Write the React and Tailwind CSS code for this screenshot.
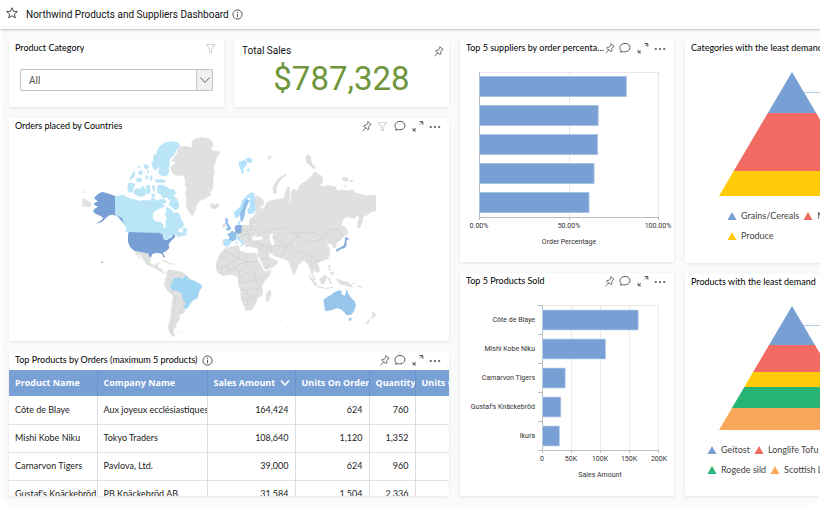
import React from "react";

const PinIcon = () => (
  <svg viewBox="0 0 12 12" className="h-[11px] w-[11px]" fill="none" stroke="currentColor" strokeWidth="0.9" strokeLinejoin="round" strokeLinecap="round">
    <path d="M7.6 1 11 3.6 9.8 4.3 8.4 6.3 8.6 8.8 7.6 9.4 2.6 5.6 3.4 4.8 5.8 4.6 7.3 2.6Z M5 7.5 2 11" />
  </svg>
);

const FunnelIcon = () => (
  <svg viewBox="0 0 12 12" className="h-[11px] w-[11px]" fill="none" stroke="#d3d6d6" strokeWidth="1.2" strokeLinejoin="round">
    <path d="M1.3 1.6H10.7L7.2 6V10.2H4.8V6Z" />
  </svg>
);

const CommentIcon = () => (
  <svg viewBox="0 0 12 12" className="h-3 w-3" fill="none" stroke="currentColor" strokeWidth="1" strokeLinejoin="round">
    <path d="M2.3 8.9C.4 7 .6 4 2.6 2.5c2-1.5 5-1.4 6.8 0 2 1.6 2 4.4.2 6C8 9.900 6 10.100 4.300 9.600L1.600 10.200Z" />
  </svg>
);

const ExpandIcon = () => (
  <svg viewBox="0 0 12 12" className="h-3 w-3" fill="none" stroke="currentColor" strokeWidth="1">
    <path d="M7.500 1.500H10.800V4.800M10.500 1.800 8 4.300M1.200 8V10.800H4M1.500 10.500 3.800 8.200" />
  </svg>
);

const MoreIcon = () => (
  <svg viewBox="0 0 12 12" className="h-3 w-3" fill="currentColor">
    <circle cx="1.800" cy="7" r="1.100" />
    <circle cx="6" cy="7" r="1.100" />
    <circle cx="10.200" cy="7" r="1.100" />
  </svg>
);

const InfoIcon = () => (
  <svg viewBox="0 0 12 12" className="h-[11px] w-[11px] shrink-0 text-[#444]" fill="none" stroke="currentColor" strokeWidth="1">
    <circle cx="6" cy="6" r="5" />
    <path d="M6 5.300V9M6 3V4.200" />
  </svg>
);

function IconButton({ label, className, children }) {
  return (
    <button type="button" aria-label={label} className={`flex h-[15px] items-center justify-center ${className}`}>
      {children}
    </button>
  );
}

function Tools({ funnel }) {
  return (
    <div className="flex shrink-0 items-center text-[#555]">
      <IconButton label="Pin" className="w-[13px]"><PinIcon /></IconButton>
      {funnel && <IconButton label="Filter" className="w-[18px]"><FunnelIcon /></IconButton>}
      <IconButton label="Comment" className="w-[18px]"><CommentIcon /></IconButton>
      <IconButton label="Maximize" className="w-[18px]"><ExpandIcon /></IconButton>
      <IconButton label="More options" className="w-4"><MoreIcon /></IconButton>
    </div>
  );
}

function Card({ title, tools, info, className = "", children }) {
  return (
    <section className={`overflow-hidden bg-white shadow-[0_1px_3px_rgba(0,0,0,0.09)] ${className}`}>
      <div className="flex h-4 items-center justify-between px-[6px]">
        <div className="-mr-[3px] flex min-w-0 items-center gap-1">
          <h2 className="truncate font-[Lato,Roboto,sans-serif] text-[9px] leading-4 text-black">{title}</h2>
          {info && <InfoIcon />}
        </div>
        {tools}
      </div>
      {children}
    </section>
  );
}

const GREY = "#dfe1e1";
const CANADA = "#bae5f6";
const DEEP = "#78a0d5";

function WorldMap() {
  return (
    <svg viewBox="0 1 440 207" className="block w-full" role="img" aria-label="Orders placed by Countries">
      <g transform="translate(61 -3) scale(0.33333)">
        <g fill={GREY}>
          <path d="M326 50 345 47 366 52 364 36 372 27 392 22 412 24 425 32 430 44 424 56 430 62 446 62 450 70 440 84 436 100 430 110 434 124 430 142 431 160 428 178 420 188 424 196 412 202 398 210 388 214 380 228 376 244 370 257 360 252 352 238 348 222 350 206 345 192 350 176 344 166 346 150 340 136 326 138 312 134 304 122 300 112 312 104 316 96 304 92 310 84 320 72Z" />
          <path d="M420 222 428 220 432 224 444 219 448 227 440 236 428 237 421 231Z" />
          <path d="M37 203 49 209 61 217 65 225 55 233 49 229 37 231ZM38 184H44V188H38Z" />
          <path d="M192 362 212 366 222 368 234 370 238 380 244 384 240 396 246 404 258 404 262 398 270 396 264 406 264 412 276 418 278 424 286 430 292 428 290 432 278 430 268 422 256 416 242 410 228 402 220 390 206 370 204 374 214 390 208 386 198 372Z" />
          <path d="M272 391 284 391 298 398 292 399 282 395ZM294 399 304 398 312 402 298 404ZM314 401H319V404H314Z" />
          <path d="M290 424 300 418 318 422 332 424 346 432 352 440 370 450 394 465 384 500 352 530 346 540 340 550 328 556 330 566 320 580 318 590 310 600 312 612 319 618 310 620 300 612 296 600 294 588 300 570 302 550 306 520 308 496 292 482 282 464 284 450 290 438Z" />
          <path d="M330 604 338 603V605L330 606ZM88 391H92V393H88ZM38 490H41V492H38Z" />
        </g>
        <g fill={CANADA}>
          <path d="M262 60 270 48 284 38 304 34 326 38 330 48 318 62 312 76 300 88 298 104 296 128 290 138 274 138 264 130 268 112 262 100 266 84 258 74Z" />
          <path d="M250 76 260 72 268 88 266 110 258 122 248 114 244 98 250 92Z" />
          <path d="M220 106 230 102 238 110 232 118 224 116ZM204 108 210 106 210 114 205 115ZM206 124 216 120 220 128 214 136 204 132ZM184 136 192 124 196 130 192 140 182 150 178 146ZM230 122 236 120 236 130 231 128ZM198 148 208 142 218 148 212 156 200 156ZM228 134 234 138 232 150 226 146ZM238 142 246 134 248 146 242 154ZM256 148 276 148 286 152 284 158 262 158 254 154Z" />
          <path d="M174 160 188 158 196 166 190 176 188 186 176 188 172 176ZM192 180 202 174 214 178 212 170 222 168 228 182 226 198 208 200 196 194 190 188ZM230 164 240 166 242 184 236 194 228 188ZM246 166 254 166 256 180 250 186ZM244 192 254 190 254 202 246 200Z" />
          <path d="M262 166 276 164 290 170 298 176 314 180 318 192 310 196 322 208 328 222 326 236 314 240 306 232 296 226 300 212 290 202 280 206 272 194 262 188ZM272 210 282 206 290 216 284 222 274 218Z" />
          <path d="M135 198 150 196 160 194 168 200 186 206 208 212 226 210 240 212 246 202 256 208 262 214 272 204 278 222 286 228 276 234 264 238 250 248 248 262 256 274 270 276 278 280 282 294 288 292 286 276 290 264 284 252 290 244 286 232 298 234 306 240 312 250 320 246 330 254 334 268 342 282 340 290 332 296 322 300 330 308 336 306 350 308 348 316 334 318 322 322 318 312 308 316 290 328 280 328 276 314 268 308 176 306 164 304 170 296 160 280 152 268 135 254Z" />
          <path d="M338 296 346 292 352 302 350 308 340 306Z" />
        </g>
        <g fill={DEEP}>
          <path d="M135 198 120 192 96 185 84 192 72 204 78 210 84 214 72 220 74 226 84 230 72 238 70 246 78 252 92 258 100 264 92 272 76 282 96 276 108 264 118 256 128 254 142 258 154 272 162 282 156 264 135 254Z" />
          <path d="M176 306 268 308 278 314 280 328 290 330 306 320 312 312 316 316 315 322 302 334 296 344 298 354 288 364 278 368 285 380 282 384 276 372 262 368 246 372 244 382 238 380 234 370 222 368 212 366 192 362 180 350 174 336 174 316Z" />
          <path d="M95 395H99V399H95Z" />
        </g>
        <path d="M296 420 300 436 312 440 318 446M332 426 330 440M290 444 300 450M300 470 296 458 306 458M308 496 306 480M308 496 318 502 316 514 306 520M318 502 338 508 342 524M316 514 312 550 306 580 304 600 310 610M342 524 330 534 332 550" fill="none" stroke="#cbcdcd" strokeWidth="1.500" />
        <path fill="#9fd6f4" d="M310 446 322 444 328 440 336 448 350 436 356 448 372 452 394 464 396 472 386 486 382 506 368 510 360 520 356 530 348 538 340 530 346 522 342 512 338 504 334 490 320 482 306 480 300 470 306 458Z" />
      </g>
      <g transform="translate(211 -3) scale(0.33333)">
        <g fill={GREY}>
          <path d="M142 80 156 78 152 86 146 90ZM160 188 158 174 164 160 176 144 196 132 200 136 186 146 176 158 170 172 170 190 164 192ZM256 82 264 72 272 80 276 100 288 110 284 118 276 114 268 104 260 100Z" />
          <path d="M366 146 370 140 384 144 386 152 374 156ZM388 150 400 150 398 156 390 156ZM372 168 380 166 380 170 374 172Z" />
          <path d="M104 200 112 196 124 204 132 214 130 226 120 230 124 238 134 232 136 222 146 214 156 210 180 206 192 204 196 186 200 172 208 170 210 186 208 218 212 214 214 184 222 176 232 182 236 170 246 160 262 150 276 136 284 122 290 128 306 138 310 156 300 168 330 166 348 170 352 182 368 178 380 182 400 178 402 186 420 192 440 196 468 194 468 244 452 246 444 254 430 262 428 276 418 296 412 294 412 278 418 262 410 258 404 266 380 260 370 270 364 284 376 290 380 304 376 316 362 330 350 338 348 354 338 352 334 342 322 344 330 356 330 374 322 388 300 396 290 400 298 412 300 424 292 428 282 422 278 432 288 450 282 450 274 434 270 416 262 400 250 392 236 404 230 420 222 436 214 420 208 400 200 390 180 384 162 378 150 368 146 374 152 384 162 388 176 394 170 404 150 416 134 420 118 386 112 372 114 356 98 352 84 350 78 352 70 338 62 326 54 320 46 310 44 290 66 286 88 284 86 274 90 264 98 262 106 250Z" />
          <path d="M18 352 40 348 56 346 60 362 80 368 108 370 116 384 128 412 136 424 154 420 152 434 132 456 126 470 130 488 126 496 114 504 108 520 96 540 78 544 70 524 62 506 62 480 54 462 54 444 48 438 30 434 10 438 -6 430 -12 416 -12 398 -2 376 8 362Z" />
          <path d="M140 488 152 478 154 490 146 514 138 514 138 500ZM264 432 276 444 292 462 286 468 272 450ZM290 466 314 472V476L290 471ZM298 448 314 434 322 440 318 452 312 464 302 460ZM324 446 336 442 330 449 336 462 331 462 326 454ZM324 404 332 406 330 416 336 422 328 420ZM330 428 340 424 342 432 334 434ZM326 386 329 384 329 391 326 391ZM226 430 231 432 229 437ZM316 474 340 470 340 473 320 477Z" />
          <path d="M346 446 354 448 368 452 384 456 400 472 388 472 376 466 362 464 354 456ZM394 460 406 458 404 463ZM410 464 428 474 426 477 410 468ZM434 502 440 506 438 508ZM465 494H470V497H465ZM454 544 466 550 468 556 456 566 452 562 458 554ZM452 564 446 580 438 584 440 576ZM198 592 204 592 202 597Z" />
          <path d="M8 282 16 279 16 291 6 294ZM7 328H13V346H8ZM380 290 384 304 382 318 378 316Z" />
        </g>
        <g fill="#fff">
          <path d="M148 314 160 310 157 322 165 344 156 346 149 330ZM96 322 106 318 112 322 122 318 130 328 112 330 98 332Z" />
          <path d="M112 384 117 382 138 422 132 422ZM318 344 334 342 330 350Z" />
        </g>
        <path d="M10 364 30 370 56 386 58 362M-2 378 18 380 34 396 56 386 80 396 82 370M80 396 110 396M-10 408 14 410 34 396M14 410 24 418 46 414 58 402 80 396 78 412 56 424 46 414M24 418 24 434M6 412 4 432M56 424 60 440 80 430 102 434 112 414 122 404M78 412 92 428M102 434 110 446 130 452M60 440 60 456 78 460 92 450 106 452 104 436M60 480 82 480 92 470 104 478 124 476M106 452 124 468M82 480 84 504 96 506 112 494M64 508 84 510 82 530M96 506 108 514M128 412 142 418" fill="none" stroke="#c9cbcb" strokeWidth="1.600" />
        <path d="M66 300 84 304 92 298 96 274M92 298 110 300 122 312 140 306M70 316 86 310 84 328 96 332M66 308 70 316 62 322M150 312 148 302 160 296 180 298 196 292 208 308 224 312 240 318 220 328 206 344 190 340 170 330 162 318M224 312 250 306 284 308 300 316 320 312 330 300 356 296 368 318 346 334M240 318 262 334 290 332 312 320M118 346 136 350 152 352 166 346 180 350 190 346 200 350 190 368 182 384M112 360 126 354 136 372 144 372M118 386 140 384 150 388M136 352 148 368M152 352 154 368M200 350 216 346 224 362 248 372 264 370 262 396M264 370 276 378 290 394 302 388M276 378 272 404 280 416M290 394 292 408 284 416M150 404 134 414M92 336 116 340 130 346M102 264 98 274 112 280" fill="none" stroke="#c9cbcb" strokeWidth="1.600" />
        <g fill="#b4e2fa">
          <path d="M56 96 68 92 72 88 82 98 78 108 70 114 72 128 66 132 62 118 58 110ZM76 88 86 82 96 86 96 96 86 100ZM80 118 86 114 90 120 84 126Z" />
          <path d="M44 264 42 246 60 230 66 212 78 198 96 186 106 192 102 198 92 202 80 206 72 220 66 236 62 256 54 262ZM88 212 92 200 104 198 106 240 98 252 84 252 82 240 90 228ZM53 278 59 270 60 284 54 286Z" />
          <path d="M13 327 28 328 36 334 28 346 16 350 12 345ZM48 320 60 318 60 326 72 340 70 347 64 340 52 328ZM48 334 52 334 52 344 48 342ZM60 346 68 346 66 350Z" />
        </g>
        <g fill="#93c0ea">
          <path d="M62 276 60 250 66 236 72 216 80 206 88 212 82 226 76 240 74 256 68 274Z" />
          <path d="M16 264 24 266 24 280 30 288 34 298 24 302 18 300 22 290 16 280ZM20 312 28 310 36 302 44 306 50 312 48 330 38 334 26 330 28 320Z" />
        </g>
        <path fill="#98c5eb" d="M310 510 322 500 334 494 340 488 350 484 358 480 366 484 364 492 374 497 380 478 386 492 392 502 404 514 408 526 402 544 394 554 380 556 374 548 366 540 352 534 336 540 318 544 314 538 312 524ZM386 564H396L392 572H387Z" />
        <path fill="#86abdf" d="M44 290 50 285 66 286 64 308 54 312 46 308ZM376 320 388 326 379 332 380 346 374 354 362 358 350 366 348 359 362 352 372 346 374 336Z" />
      </g>
    </svg>
  );
}

const SUPPLIER_BARS = [81.800, 66.100, 65.700, 63.800, 61];

function SupplierChart() {
  return (
    <svg viewBox="0 1 214 206" className="block w-full" role="img" aria-label="Order percentage by supplier">
      <path d="M19 17.500H199M109.500 17V162M198.500 17V162" stroke="#e6e8e8" />
      <path d="M19.500 17V165M19 162.500H199M109.500 162V165M198.500 162V165" stroke="#b9bcbc" fill="none" />
      {SUPPLIER_BARS.map((value, i) => (
        <rect key={i} x="19.500" y={21.500 + i * 29} width={value * 1.795} height="20" fill={DEEP} stroke="#a9c3e5" />
      ))}
      <g fill="#333" fontSize="7" textAnchor="middle">
        <text x="19" y="173">0.00%</text>
        <text x="109" y="173">50.00%</text>
        <text x="198" y="173">100.00%</text>
        <text x="109" y="189">Order Percentage</text>
      </g>
    </svg>
  );
}

const PRODUCT_BARS = [
  ["Côte de Blaye", 164.400],
  ["Mishi Kobe Niku", 108.600],
  ["Carnarvon Tigers", 39],
  ["Gustaf's Knäckebröd", 31.600],
  ["Ikura", 29.500],
];

function ProductChart() {
  return (
    <svg viewBox="0 1 214 207" className="block w-full" role="img" aria-label="Sales amount by product">
      <path d="M82 17.500H199M111.500 17V162M140.500 17V162M169.500 17V162M198.500 17V162" stroke="#e9ebeb" />
      <path d="M82.500 17V162M82 162.500H199M78 17.500H82M78 46.500H82M78 75.500H82M78 104.500H82M78 133.500H82M78 162.500H82M82.500 162V165M111.500 162V165M140.500 162V165M169.500 162V165M198.500 162V165" stroke="#bbbebe" />
      <g fontSize="7" fill="#333">
        {PRODUCT_BARS.map(([name, value], i) => (
          <g key={name}>
            <rect x="82.500" y={22 + i * 29} width={value * 0.582} height="20" fill={DEEP} stroke="#c4d7ef" strokeWidth="0.700" />
            <text x="75" y={34 + i * 29} textAnchor="end">{name}</text>
          </g>
        ))}
        <g textAnchor="middle">
          <text x="82" y="173">0</text>
          <text x="111" y="173">50K</text>
          <text x="140" y="173">100K</text>
          <text x="169" y="173">150K</text>
          <text x="199" y="173">200K</text>
          <text x="140" y="189">Sales Amount</text>
        </g>
      </g>
    </svg>
  );
}

function Pyramid({ bands, lead }) {
  const slope = 73 / 124;
  return (
    <svg viewBox="0 1 214 142" className="block w-full" aria-hidden="true">
      <path d={`M115 ${lead}H214`} stroke="#b3cdec" />
      {bands.map(([top, bottom, color]) => (
        <path
          key={color}
          fill={color}
          d={`M${107 - top * slope} ${17 + top}H${107 + top * slope}L${107 + bottom * slope} ${17 + bottom}H${107 - bottom * slope}Z`}
        />
      ))}
    </svg>
  );
}

function LegendItem({ color, children }) {
  return (
    <li className="flex items-center gap-1 whitespace-nowrap">
      <svg viewBox="0 0 10 8" className="h-2 w-[10px]" aria-hidden="true"><path d="M5 0 9.500 8H.5Z" fill={color} /></svg>
      {children}
    </li>
  );
}

const ROWS = [
  ["Côte de Blaye", "Aux joyeux ecclésiastiques", "164,424", "624", "760", "17"],
  ["Mishi Kobe Niku", "Tokyo Traders", "108,640", "1,120", "1,352", "29"],
  ["Carnarvon Tigers", "Pavlova, Ltd.", "39,000", "624", "960", "42"],
  ["Gustaf's Knäckebröd", "PB Knäckebröd AB", "31,584", "1,504", "2,336", "104"],
];

function OrdersTable() {
  return (
    <div className="mt-[2px] h-[126px] overflow-hidden">
      <table className="w-full min-w-[500px] table-fixed border-collapse text-[9px]">
        <colgroup>
          <col className="w-[88px]" />
          <col className="w-[110px]" />
          <col className="w-[88px]" />
          <col className="w-[74px]" />
          <col className="w-[46px]" />
          <col />
        </colgroup>
        <thead>
          <tr className="h-[26px] bg-[#78a0d5] text-left font-['Open_Sans','Noto_Sans',sans-serif] text-white">
            {["Product Name", "Company Name", "Sales Amount", "Units On Order", "Quantity", "Units On Hand"].map((name, i) => (
              <th key={name} scope="col" className="overflow-hidden border-r border-[#6a92cb] p-0 pl-[6px] font-bold whitespace-nowrap">
                <span className="flex items-center gap-[5px]">
                  {name}
                  {i === 2 && (
                    <svg viewBox="0 0 10 8" className="h-2 w-[10px] shrink-0" fill="none" stroke="#fff" strokeWidth="1.600"><path d="M1 1.500 5 6 9 1.500" /></svg>
                  )}
                </span>
              </th>
            ))}
          </tr>
        </thead>
        <tbody className="font-[Lato,'Open_Sans',sans-serif]">
          {ROWS.map((row) => (
            <tr key={row[0]} className="h-7 border-b border-[#e2e2e2] text-[#222]">
              {row.map((cell, i) => (
                <td key={i} className={`overflow-hidden border-r border-[#dcdcdc] px-[6px] py-0 whitespace-nowrap ${i > 1 ? "text-right" : "pr-0"}`}>
                  {cell}
                </td>
              ))}
            </tr>
          ))}
        </tbody>
      </table>
    </div>
  );
}

export default function App() {
  return (
    <div className="min-h-screen overflow-hidden bg-white font-[Roboto,'Liberation_Sans',sans-serif] text-[#2a2a2a]">
      <header className="relative flex h-[29px] items-center bg-white pl-[6px] shadow-[0_1px_2px_rgba(0,0,0,0.25)]">
        <button type="button" aria-label="Favorite" className="mb-1">
          <svg viewBox="0 0 12 12" className="h-3 w-3" fill="none" stroke="#333" strokeWidth="0.900" strokeLinejoin="round">
            <path d="M6 .8 7.500 4.300 11.300 4.600 8.400 7.100 9.300 10.900 6 8.800 2.700 10.900 3.600 7.100.7 4.600 4.500 4.300Z" />
          </svg>
        </button>
        <h1 className="mr-[3px] ml-2 text-[10px] text-[#111]">Northwind Products and Suppliers Dashboard</h1>
        <InfoIcon />
      </header>
      <main className="ml-[2px] overflow-hidden rounded-b-2xl bg-[#f9fbfb] pt-[11px] pb-[11px] pl-[7px]">
        <div className="grid grid-cols-[minmax(440px,2fr)_minmax(214px,1fr)_minmax(214px,1fr)] gap-[11px]">
          <div className="flex flex-col gap-[11px]">
            <div className="grid grid-cols-2 gap-[10px]">
              <Card title={<label htmlFor="category">Product Category</label>} tools={<span className="pr-[2px]"><FunnelIcon /></span>}>
                <div className="mx-[11px] mt-[13px] mb-4 grid grid-cols-[1fr] rounded-[1px] border border-[#c3c5c5]">
                  <select id="category" className="col-start-1 row-start-1 h-5 w-full appearance-none bg-white pl-2 text-[10px] text-[#555]">
                    <option>All</option>
                  </select>
                  <span className="pointer-events-none col-start-1 row-start-1 flex w-4 items-center justify-center justify-self-end border-l border-[#c3c5c5] bg-[#eef0f1]">
                    <svg viewBox="0 0 10 8" className="h-2 w-[10px]" fill="none" stroke="#666"><path d="M.5 1.500 5 6.500 9.500 1.500" /></svg>
                  </span>
                </div>
              </Card>
              <section className="bg-white shadow-[0_1px_3px_rgba(0,0,0,0.09)]">
                <div className="flex items-center justify-between pt-[3px] pr-1 pl-2">
                  <h2 className="text-[10px] leading-4 text-[#111]">Total Sales</h2>
                  <IconButton label="Pin" className="w-[13px] text-[#555]"><PinIcon /></IconButton>
                </div>
                <p className="text-center text-[33px] leading-10 text-[#6f963c]">$787,328</p>
              </section>
            </div>
            <Card title="Orders placed by Countries" tools={<Tools funnel />}>
              <WorldMap />
            </Card>
            <Card title="Top Products by Orders (maximum 5 products)" info tools={<Tools />}>
              <OrdersTable />
            </Card>
          </div>
          <div className="flex flex-col gap-[11px]">
            <Card title="Top 5 suppliers by order percentage" tools={<Tools />}>
              <SupplierChart />
            </Card>
            <Card title="Top 5 Products Sold" tools={<Tools />}>
              <ProductChart />
            </Card>
          </div>
          <div className="grid grid-rows-2 gap-[11px]">
            <Card title="Categories with the least demand">
              <Pyramid lead="37.500" bands={[[0, 41, "#78a0d5"], [41, 99, "#f16b62"], [99, 124, "#ffca08"]]} />
              <ul className="flex flex-wrap gap-x-1 gap-y-1 pt-[10px] pl-[42px] font-[Lato,Roboto,sans-serif] text-[9px] leading-4 text-[#444]">
                <LegendItem color="#78a0d5">Grains/Cereals</LegendItem>
                <LegendItem color="#f16b62">Meat/Poultry</LegendItem>
                <LegendItem color="#ffca08">Produce</LegendItem>
              </ul>
            </Card>
            <Card title="Products with the least demand">
              <Pyramid lead="36.500" bands={[[0, 39, "#78a0d5"], [39, 66, "#f16b62"], [66, 81, "#ffca08"], [81, 102, "#27b473"], [102, 124, "#f9a75b"]]} />
              <ul className="flex flex-wrap gap-x-1 gap-y-1 pt-[10px] pl-[22px] font-[Lato,Roboto,sans-serif] text-[9px] leading-4 text-[#444]">
                <LegendItem color="#78a0d5">Geitost</LegendItem>
                <LegendItem color="#f16b62">Longlife Tofu</LegendItem>
                <LegendItem color="#ffca08">Filo Mix</LegendItem>
                <LegendItem color="#27b473">Rogede sild</LegendItem>
                <LegendItem color="#f9a75b">Scottish Longbreads</LegendItem>
              </ul>
            </Card>
          </div>
        </div>
      </main>
    </div>
  );
}
